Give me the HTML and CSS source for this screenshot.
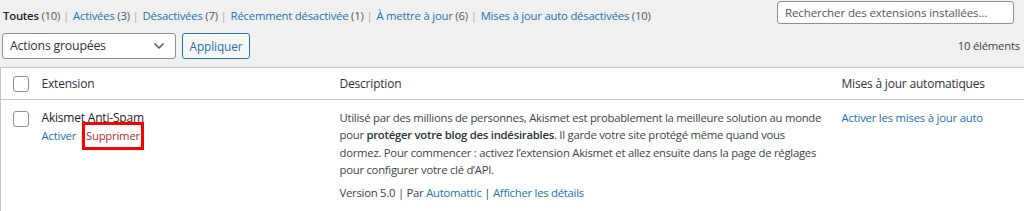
FILE: index.html
```html
<!DOCTYPE html>
<html lang="fr">
<head>
    <meta charset="UTF-8">
    <title>Extensions</title>
    <link rel="stylesheet" href="styles.css">
</head>
<body>
    <div class="top-bar">
        <ul class="subsubsub">
            <li><a class="current">Toutes <span class="count">(10)</span></a> |</li>
            <li><a>Activées <span class="count">(3)</span></a> |</li>
            <li><a>Désactivées <span class="count">(7)</span></a> |</li>
            <li><a>Récemment désactivée <span class="count">(1)</span></a> |</li>
            <li><a>À mettre à jour <span class="count">(6)</span></a> |</li>
            <li><a>Mises à jour auto désactivées <span class="count">(10)</span></a></li>
        </ul>
        <input type="search" class="search-box" placeholder="Rechercher des extensions installées...">
    </div>
    <div class="tablenav">
        <div class="bulk">
            <div class="select-box">
                <span>Actions groupées</span>
                <svg width="12" height="8" viewBox="0 0 12 8"><path d="M1.5 1.5 6 6l4.5-4.5" fill="none" stroke="#50575e" stroke-width="1.5"/></svg>
            </div>
            <button class="apply-btn">Appliquer</button>
        </div>
        <div class="num-items">10 éléments</div>
    </div>
    <table class="plugins">
        <thead>
            <tr>
                <th class="check-col"><span class="cb"></span></th>
                <th class="name-col">Extension</th>
                <th class="desc-col">Description</th>
                <th class="auto-col">Mises à jour automatiques</th>
            </tr>
        </thead>
        <tbody>
            <tr>
                <td class="check-col"><span class="cb"></span></td>
                <td class="name-col">
                    <div class="plugin-title">Akismet Anti-Spam</div>
                    <div class="row-actions"><a>Activer</a> <span class="sep">|</span><a class="delete">Supprimer</a></div>
                </td>
                <td class="desc-col">
                    <p>Utilisé par des millions de personnes, Akismet est probablement la meilleure solution au monde pour <strong>protéger votre blog des indésirables</strong>. Il garde votre site protégé même quand vous dormez. Pour commencer : activez l’extension Akismet et allez ensuite dans la page de réglages pour configurer votre clé d’API.</p>
                    <div class="meta">Version 5.0 | Par <a>Automattic</a> | <a>Afficher les détails</a></div>
                </td>
                <td class="auto-col"><a>Activer les mises à jour auto</a></td>
            </tr>
        </tbody>
    </table>
</body>
</html>
```

FILE: styles.css
```css
body {
    margin: 0;
    background-color: #f0f0f1;
    font-family: "Open Sans", "Noto Sans", sans-serif;
    font-size: 11.3px;
    letter-spacing: -0.2px;
    color: #3c434a;
    overflow: hidden;
}
a {
    color: #2271b1;
    text-decoration: none;
}
.top-bar {
    display: flex;
    justify-content: space-between;
    align-items: flex-start;
    padding: 2px 10px 0 3px;
    height: 27px;
}
.subsubsub {
    list-style: none;
    margin: 6px 0 0 0;
    padding: 0;
    display: flex;
    gap: 4px;
    color: #a7aaad;
}
.subsubsub a {
    color: #2271b1;
}
.subsubsub .count {
    color: #50575e;
}
.subsubsub .current {
    color: #1d2327;
    font-weight: 600;
}
.subsubsub .current .count {
    font-weight: 400;
}
.search-box {
    width: 237px;
    height: 23px;
    box-sizing: border-box;
    margin: 0;
    margin-top: -1px;
    border: 1px solid #8c8f94;
    border-radius: 3px;
    padding: 0 7px;
    font-family: inherit;
    font-size: 11.5px;
    letter-spacing: -0.1px;
    background: #fff;
}
.search-box::placeholder {
    color: #50575e;
}
.tablenav {
    display: flex;
    justify-content: space-between;
    align-items: center;
    padding: 3px 4px 0 2px;
    height: 27px;
}
.bulk {
    display: flex;
    gap: 6px;
}
.select-box {
    width: 174px;
    height: 26px;
    box-sizing: border-box;
    background: #fff;
    border: 1px solid #8c8f94;
    border-radius: 3px;
    display: flex;
    justify-content: space-between;
    align-items: center;
    padding: 0 10px 0 7px;
    color: #2c3338;
    font-size: 12.3px;
}
.apply-btn {
    height: 26px;
    width: 68px;
    box-sizing: border-box;
    background: #f6f7f7;
    border: 1px solid #2271b1;
    border-radius: 3px;
    color: #2271b1;
    font-family: inherit;
    font-size: 11.8px;
    letter-spacing: -0.1px;
    padding: 0;
}
.num-items {
    color: #3c434a;
}
.plugins {
    margin-top: 8px;
    width: 1030px;
    border-collapse: collapse;
    background: #fff;
    border: 1px solid #c3c4c7;
    table-layout: fixed;
}
.plugins th {
    font-weight: 400;
    text-align: left;
    color: #2c3338;
    font-size: 12px;
    height: 30px;
    padding: 0 10px 1px 10px;
    border-bottom: 1px solid #c3c4c7;
}
.plugins td {
    vertical-align: top;
    padding: 9px 10px 10px 10px;
    line-height: 17.3px;
}
.check-col {
    width: 32px;
    box-sizing: border-box;
}
.plugins .check-col {
    padding: 0 0 0 12px;
}
.plugins td.check-col {
    padding-top: 11px;
}
.plugins .name-col {
    width: 277px;
    padding-left: 9px;
}
.plugins .desc-col {
    width: 485px;
    padding-left: 11px;
    padding-right: 6px;
}
.plugins td.desc-col {
    letter-spacing: -0.25px;
}
.plugins .auto-col {
    padding-left: 11px;
}
.cb {
    display: block;
    width: 14px;
    height: 14px;
    border: 1px solid #8c8f94;
    border-radius: 3px;
    background: #fff;
}
.plugin-title {
    color: #1d2327;
    font-size: 12px;
}
.row-actions {
    margin-top: 1px;
    color: #a7aaad;
}
.row-actions .delete {
    color: #b32d2e;
    border: 3px solid #f00;
    padding: 3px 1px 4px 1px;
    margin-left: -3px;
}
.desc-col p {
    margin: 0 0 6px 0;
}
.desc-col strong {
    color: #2c3338;
    font-weight: 600;
}
.meta {
    color: #3c434a;
}
```
